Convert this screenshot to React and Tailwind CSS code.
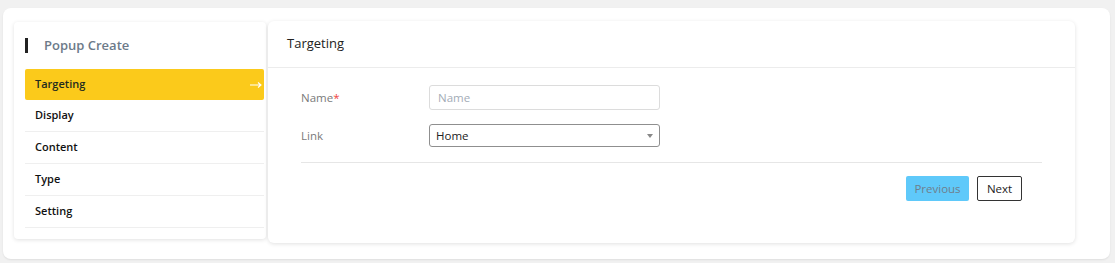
import React from "react";

export default function App() {
  const items = ["Display", "Content", "Type", "Setting"];
  return (
    <div className="w-[1115px] h-[263px] bg-[#f1f1f1] pt-[8px] pl-[3px] pr-[5px] font-['Open_Sans',sans-serif]">
      <div className="h-[251px] bg-white rounded-[8px] shadow-[0_1px_2px_rgba(0,0,0,0.08)] pl-[11px] pt-[13px] flex items-start">
        {/* left card */}
        <div className="w-[252px] h-[217px] mt-[1px] bg-white rounded-[4px] shadow-[0_1px_4px_rgba(0,0,0,0.12)] pl-[11px] pr-[2px]">
          <div className="flex items-center h-[47px]">
            <div className="w-[3px] h-[15px] bg-[#222]" />
            <div className="ml-[16px] text-[13px] font-semibold text-[#6c7a89]">Popup Create</div>
          </div>
          <div className="h-[31px] bg-[#fbca1b] rounded-[2px] flex items-center justify-between pl-[10px] pr-[2px] text-[11px] font-semibold text-[#1f2a1f]">
            <span>Targeting</span>
            <svg width="12" height="8" viewBox="0 0 12 8">
              <path d="M0 4H11M8 1.5L11 4L8 6.5" stroke="white" strokeWidth="1.1" fill="none" />
            </svg>
          </div>
          {items.map((t) => (
            <div key={t} className="h-[32px] border-b border-[#efefef] flex items-center pl-[10px] text-[11px] font-semibold text-[#111]">
              {t}
            </div>
          ))}
        </div>
        {/* right card */}
        <div className="ml-[2px] w-[807px] h-[222px] bg-white rounded-[6px] shadow-[0_1px_4px_rgba(0,0,0,0.12)]">
          <div className="h-[47px] border-b border-[#ececec] flex items-center pl-[19px] text-[13px] text-[#222]">
            Targeting
          </div>
          <div className="px-[33px] pt-[17px]">
            <div className="flex items-center h-[25px]">
              <div className="w-[128px] text-[11.5px] text-[#7a7a7a]">
                Name<span className="text-[#ef4444]">*</span>
              </div>
              <div className="w-[231px] h-[25px] border border-[#dcdcdc] rounded-[3px] flex items-center pl-[8px] text-[11.5px] text-[#a3acb7]">
                Name
              </div>
            </div>
            <div className="flex items-center h-[23px] mt-[14px]">
              <div className="w-[128px] text-[11.5px] text-[#7a7a7a]">Link</div>
              <div className="w-[231px] h-[23px] border border-[#8f8f8f] rounded-[3px] flex items-center justify-between pl-[6px] pr-[6px] text-[11.5px] text-[#222]">
                <span>Home</span>
                <span className="w-0 h-0 border-l-[3px] border-r-[3px] border-t-[4px] border-l-transparent border-r-transparent border-t-[#888]" />
              </div>
            </div>
            <div className="mt-[15px] border-t border-[#e6e6e6]" />
            <div className="flex justify-end gap-[8px] pr-[20px] mt-[13px]">
              <div className="h-[25px] w-[63px] justify-center bg-[#5fc9fa] rounded-[2px] flex items-center text-[11.5px] text-[#6f7f8c]">
                Previous
              </div>
              <div className="h-[25px] w-[45px] justify-center border border-[#333] rounded-[2px] flex items-center text-[11.5px] text-[#222]">
                Next
              </div>
            </div>
          </div>
        </div>
      </div>
    </div>
  );
}
